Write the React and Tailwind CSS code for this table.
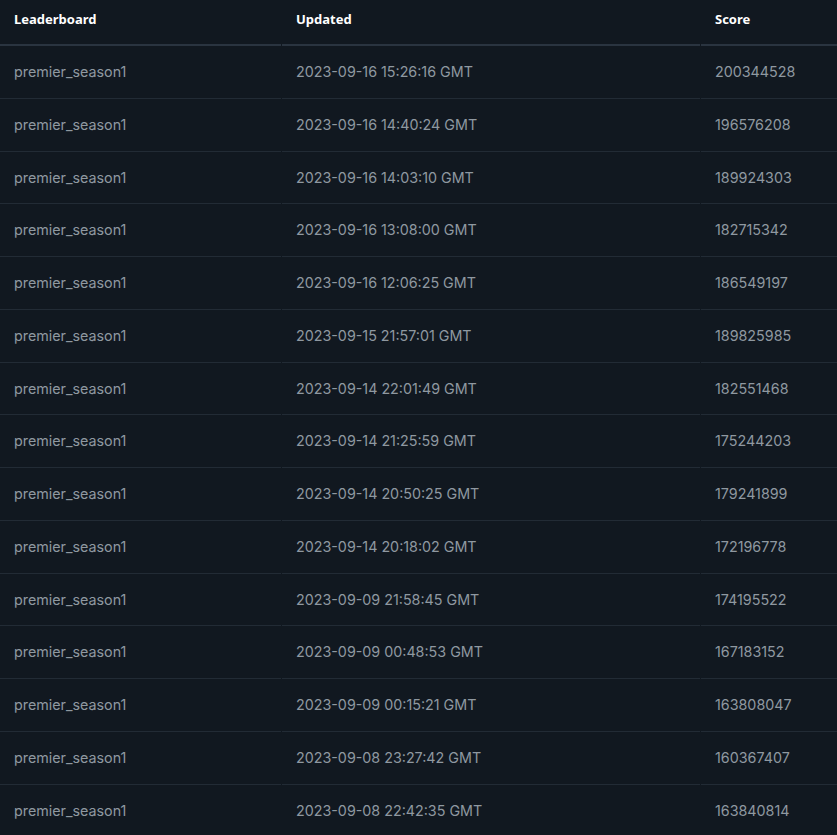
import React from "react";

const rows = [
  ["2023-09-16 15:26:16 GMT", "200344528"],
  ["2023-09-16 14:40:24 GMT", "196576208"],
  ["2023-09-16 14:03:10 GMT", "189924303"],
  ["2023-09-16 13:08:00 GMT", "182715342"],
  ["2023-09-16 12:06:25 GMT", "186549197"],
  ["2023-09-15 21:57:01 GMT", "189825985"],
  ["2023-09-14 22:01:49 GMT", "182551468"],
  ["2023-09-14 21:25:59 GMT", "175244203"],
  ["2023-09-14 20:50:25 GMT", "179241899"],
  ["2023-09-14 20:18:02 GMT", "172196778"],
  ["2023-09-09 21:58:45 GMT", "174195522"],
  ["2023-09-09 00:48:53 GMT", "167183152"],
  ["2023-09-09 00:15:21 GMT", "163808047"],
  ["2023-09-08 23:27:42 GMT", "160367407"],
  ["2023-09-08 22:42:35 GMT", "163840814"],
];

export default function App() {
  return (
    <div className="w-[837px] h-[835px] overflow-hidden bg-[#111820] font-['Noto_Sans',sans-serif]">
      <table className="border-separate border-spacing-x-[1px] border-spacing-y-0 -mx-[1px] w-[839px]">
        <thead>
          <tr className="h-[46px]">
            <th className="w-[281px] text-left pl-[14px] pb-[4px] text-[13px] font-bold text-white border-b-2 border-[#2a3440]">Leaderboard</th>
            <th className="w-[418px] text-left pl-[14px] pb-[4px] text-[13px] font-bold text-white border-b-2 border-[#2a3440]">Updated</th>
            <th className="text-left pl-[14px] pb-[4px] text-[13px] font-bold text-white border-b-2 border-[#2a3440]">Score</th>
          </tr>
        </thead>
        <tbody className="font-['Inter',sans-serif] text-[14.3px] text-[#8f98a0]">
          {rows.map(([d, s], i) => (
            <tr key={i} className="h-[52.75px]">
              <td className="pl-[14px] border-b border-[#222b35]">premier_season1</td>
              <td className="pl-[14px] border-b border-[#222b35]">{d}</td>
              <td className="pl-[14px] border-b border-[#222b35]">{s}</td>
            </tr>
          ))}
        </tbody>
      </table>
    </div>
  );
}
